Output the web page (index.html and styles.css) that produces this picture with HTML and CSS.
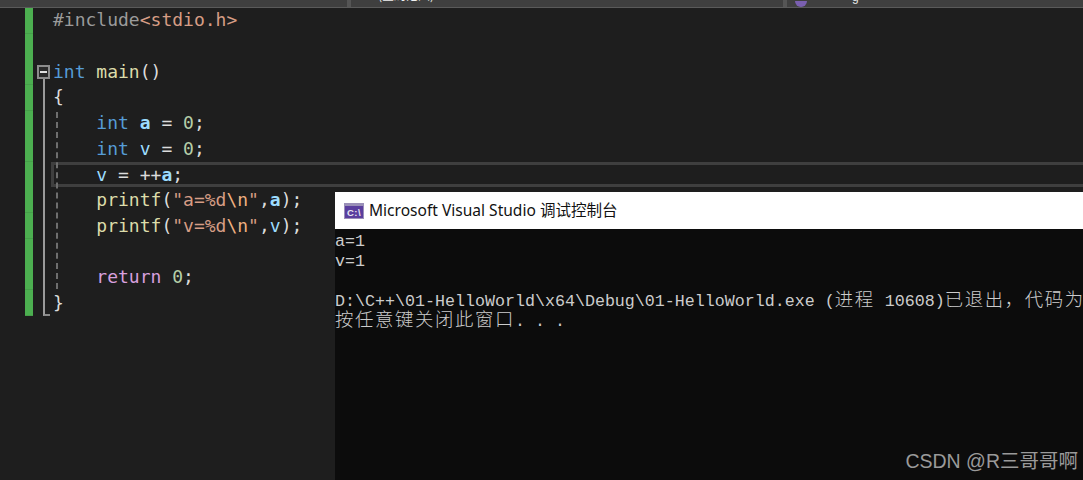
FILE: index.html
```html
<!DOCTYPE html>
<html lang="zh-CN">
<head>
<meta charset="utf-8">
<title>Microsoft Visual Studio</title>
<link rel="stylesheet" href="styles.css">
</head>
<body>
<div class="screen">
  <header class="navbar">
    <div class="nav-seg nav-first"></div>
    <div class="nav-seg nav-second"><span class="nav-text">(全局范围)</span></div>
    <div class="nav-seg nav-third"><span class="nav-icon"></span><span class="nav-glyph">g</span></div>
  </header>
  <main class="editor">
    <div class="changebar"></div>
    <div class="folding">
      <div class="fold-box"><span class="fold-minus"></span></div>
      <div class="fold-line"></div>
    </div>
    <div class="code">
      <div class="guide"></div>
      <div class="line"><span class="pp">#include</span><span class="inc">&lt;stdio.h&gt;</span></div>
      <div class="line"></div>
      <div class="line"><span class="kw">int</span> <span class="fn">main</span>()</div>
      <div class="line">{</div>
      <div class="line">    <span class="kw">int</span> <span class="var strong">a</span> = <span class="num">0</span>;</div>
      <div class="line">    <span class="kw">int</span> <span class="var">v</span> = <span class="num">0</span>;</div>
      <div class="line current">    <span class="var">v</span> = ++<span class="var strong">a</span>;</div>
      <div class="line">    <span class="fn">printf</span>(<span class="str">"a=%d</span><span class="esc">\n</span><span class="str">"</span>,<span class="var strong">a</span>);</div>
      <div class="line">    <span class="fn">printf</span>(<span class="str">"v=%d</span><span class="esc">\n</span><span class="str">"</span>,<span class="var">v</span>);</div>
      <div class="line"></div>
      <div class="line">    <span class="ctl">return</span> <span class="num">0</span>;</div>
      <div class="line">}</div>
    </div>
  </main>
  <section class="console">
    <div class="console-title">
      <svg class="console-icon" width="20" height="16" viewBox="0 0 20 16" aria-hidden="true">
        <rect x="0" y="0" width="20" height="16" fill="#9a90b8"/>
        <rect x="1" y="3" width="18" height="12" fill="#5a3e9e"/>
        <text x="10" y="12.5" text-anchor="middle" class="console-icon-text">C:\</text>
      </svg>
      <span class="console-title-text">Microsoft Visual Studio 调试控制台</span>
    </div>
    <div class="console-body">
      <div class="cline">a=1</div>
      <div class="cline">v=1</div>
      <div class="cline"></div>
      <div class="cline">D:\C++\01-HelloWorld\x64\Debug\01-HelloWorld.exe (<span class="cjk">进程</span> 10608)<span class="cjk">已退出，代码为</span> 0<span class="cjk">。</span></div>
      <div class="cline"><span class="cjk">按任意键关闭此窗口</span>. . .</div>
    </div>
  </section>
  <div class="watermark">CSDN @R三哥哥啊</div>
</div>
</body>
</html>
```
FILE: styles.css
```css
* { box-sizing: border-box; }
html, body { margin: 0; padding: 0; height: 100%; background: #1e1e1e; }
.screen {
  position: relative;
  width: 1083px;
  height: 480px;
  overflow: hidden;
  display: flex;
  flex-direction: column;
  background: #1e1e1e;
}
.navbar {
  flex: none;
  display: flex;
  height: 8px;
  background: #3f3f3f;
  border-bottom: 1px solid #5a5a5a;
  overflow: hidden;
}
.nav-seg {
  display: flex;
  align-items: flex-end;
  height: 7px;
  overflow: hidden;
  border-right: 4px solid #555;
}
.nav-first { width: 351px; }
.nav-second { width: 436px; padding-left: 27px; padding-bottom: 5px; }
.nav-third { flex: 1; border-right: 0; padding-left: 8px; padding-bottom: 3px; gap: 45px; }
.nav-text {
  font: 12px/14px "Noto Sans CJK SC", sans-serif;
  color: #f0f0f0;
  white-space: nowrap;
}
.nav-icon {
  flex: none;
  width: 12px;
  height: 6px;
  margin-bottom: -3px;
  background: #7a5fb0;
  border-radius: 0 0 6px 6px;
}
.nav-glyph { font: 12px/14px "Liberation Sans", sans-serif; color: #e8e8e8; }
.editor { flex: 1; display: flex; min-height: 0; padding-left: 25px; }
.changebar {
  flex: none;
  width: 8px;
  height: 308px;
  background: repeating-linear-gradient(#4caf50 0 25px, #469f4a 25px 25.64px);
}
.folding { flex: none; width: 20px; display: flex; flex-direction: column; padding: 57px 0 0 4px; }
.fold-box {
  width: 13px;
  height: 14px;
  border: 2px solid #8c8c8c;
  background: #2a2a2a;
  display: flex;
  align-items: center;
  justify-content: center;
}
.fold-minus { width: 7px; height: 2px; background: #e0e0e0; }
.fold-line {
  width: 7px;
  height: 237px;
  margin-left: 6px;
  border-left: 2px solid #9a9a9a;
  border-bottom: 2px solid #8a8a8a;
}
.code {
  position: relative;
  flex: 1;
  min-width: 0;
  margin-top: -0.6px;
  font-family: "DejaVu Sans Mono", monospace;
  font-size: 18px;
  color: #dcdcdc;
}
.line { height: 25.7px; line-height: 25.2px; white-space: pre; }
.current {
  margin: 0 -6px 0 -2px;
  padding-left: 2px;
  box-shadow: inset 0 0 0 3px #3f3f3f;
}
.guide {
  position: absolute;
  z-index: 1;
  left: 3px;
  top: 105px;
  height: 177px;
  border-left: 2px dashed #6e6e6e;
}
.pp { color: #9b9b9b; }
.inc { color: #d69d85; }
.kw { color: #569cd6; }
.fn { color: #dcdcaa; }
.var { color: #9cdcfe; }
.strong { font-weight: 700; }
.num { color: #b5cea8; }
.str { color: #d69d85; }
.esc { color: #efb080; }
.ctl { color: #d8a0df; }
.console {
  position: absolute;
  z-index: 2;
  left: 335px;
  top: 192px;
  right: 0;
  bottom: 0;
  display: flex;
  flex-direction: column;
  background: #0c0c0c;
}
.console-title {
  flex: none;
  height: 37px;
  display: flex;
  align-items: center;
  gap: 5px;
  padding-left: 9px;
  background: #fff;
}
.console-icon { flex: none; }
.console-icon-text { font: 700 9.5px "Liberation Sans", sans-serif; fill: #e6e6f0; letter-spacing: 0.5px; }
.console-title-text {
  margin-bottom: 2px;
  font: 15.55px/20px "Noto Sans", "Noto Sans CJK SC", sans-serif;
  color: #111;
  white-space: nowrap;
}
.console-body {
  padding-top: 3px;
  font-family: "Liberation Mono", monospace;
  font-size: 16.67px;
  color: #cccccc;
}
.cline { height: 20px; line-height: 20px; white-space: pre; }
.cjk {
  font-family: "Noto Sans CJK SC", sans-serif;
  font-size: 18.4px;
  font-weight: 300;
  line-height: 0;
  letter-spacing: 1.6px;
}
.watermark {
  position: absolute;
  z-index: 3;
  right: 5px;
  top: 449px;
  font: 19.5px/24px "Liberation Sans", "Noto Sans CJK SC", sans-serif;
  color: #9a9a9a;
  white-space: nowrap;
}
```
